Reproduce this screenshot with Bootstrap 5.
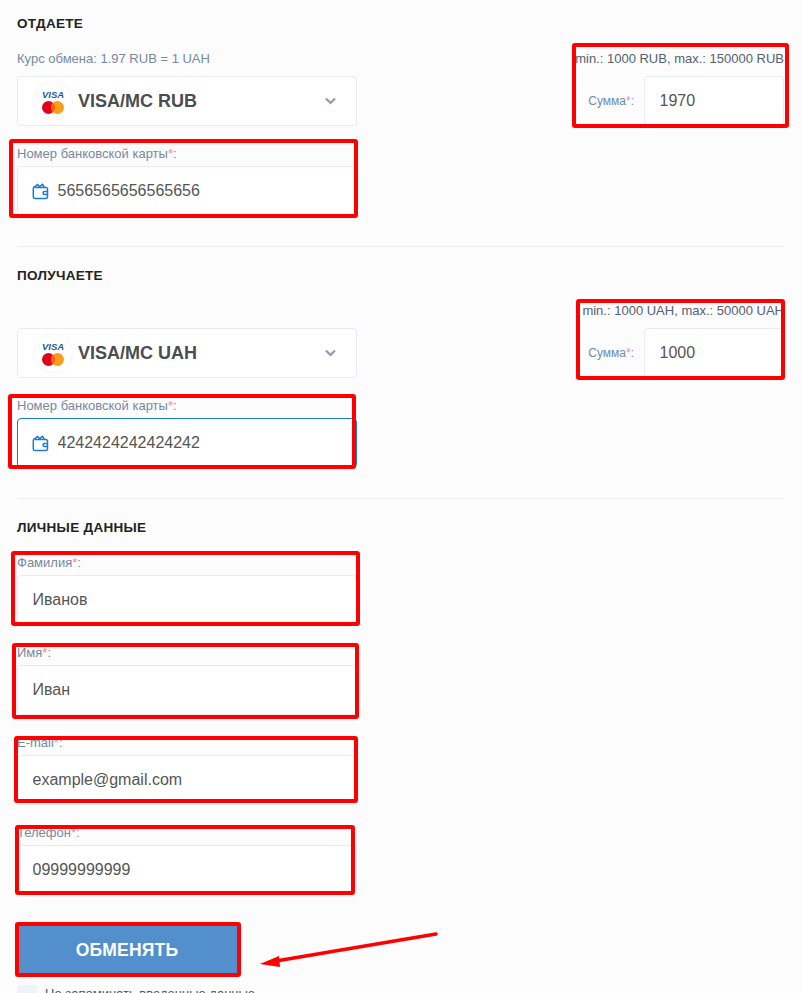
<!DOCTYPE html>
<html lang="ru">
<head>
<meta charset="utf-8">
<title>Обмен</title>
<link href="https://cdn.jsdelivr.net/npm/bootstrap@5.3.0/dist/css/bootstrap.min.css" rel="stylesheet">
<style>
html,body{margin:0;background:#fcfcfd}
body{font-family:"Liberation Sans",Arial,sans-serif;font-size:13px}
.sheet{position:relative;height:993px;overflow:hidden;padding:15px 19px 0 17px}
.sec-title{font-size:13.5px;font-weight:700;line-height:18px;height:16px;color:#222;letter-spacing:.3px;margin:0 0 19px}
.muted-line{font-size:13px;line-height:18px;height:16px;color:#78899f;margin-bottom:10px;white-space:nowrap}
.limit-line{font-size:13px;line-height:18px;height:16px;color:#556070;margin-bottom:10px;text-align:right;white-space:nowrap}
.left-col{width:340px}
.right-col{width:209px}
.pay-select{height:50px;background:#fff;border:1px solid #e8ebf3;border-radius:4px;padding:0 20px 0 15px;margin-bottom:19px}
.pay-logo{width:40px;height:40px;border:1px solid #f7f7f9;border-radius:50%;background:#fff;margin-right:5px}
.visa-word{font-size:9.5px;line-height:9px;font-weight:700;font-style:italic;color:#2a5a8f;margin:2px 0}
.pay-name{font-size:18px;font-weight:700;color:#4a4d51}
.field-label{display:block;font-size:13px;line-height:18px;height:16px;color:#78899f;margin:0 0 5px}
.req{color:#f28b9b}
.field-wrap{margin-bottom:19px}
.form-control.entry{height:50px;border:1px solid #e8ebf3;border-radius:4px;background:#fff;font-size:16px;color:#555;padding:0 14.5px;box-shadow:none}
.form-control.entry.icon-pad{padding-left:39.5px}
.form-control.entry.active-entry{border-color:#1b7ad1}
.icon-box{position:relative}
.wallet{position:absolute;left:15px;top:17px;width:17px;height:17px}
.sum-label{font-size:12px;color:#6f8cae;width:69px;text-align:right;padding-right:10px;white-space:nowrap}
.sum-entry{width:140px;flex:none}
.rule{border:0;border-top:1px solid #eceef5;opacity:1;margin:30px 0 20px}
.go-btn{width:220px;height:50px;background:#528fcc;border:0;border-radius:2px;color:#fff;font-size:17.5px;font-weight:700;letter-spacing:.2px;margin-top:11px}
.go-btn:hover{background:#528fcc;color:#fff}
.keep-row{margin-top:10px;font-size:13px;line-height:17px;color:#555}
.keep-box{width:20px;height:20px;background:#eef2fb;border-radius:3px;margin-right:8px}
.marks{position:absolute;left:0;top:0;width:803px;height:993px;pointer-events:none}
</style>
</head>
<body>
<div class="sheet">
  <h2 class="sec-title">ОТДАЕТЕ</h2>
  <div class="d-flex justify-content-between">
    <div class="left-col">
      <div class="muted-line">Курс обмена: 1.97 RUB = 1 UAH</div>
      <div class="pay-select d-flex align-items-center">
        <div class="pay-logo d-flex flex-column align-items-center justify-content-center">
          <span class="visa-word">VISA</span>
          <svg width="22" height="13" viewBox="0 0 22 13"><circle cx="6.5" cy="6.5" r="6.5" fill="#e3001b"/><circle cx="15.5" cy="6.5" r="6.5" fill="#f99e1c"/><path d="M11 1.7a6.5 6.5 0 0 1 0 9.6a6.5 6.5 0 0 1 0-9.6z" fill="#f4640f"/></svg>
        </div>
        <span class="pay-name flex-grow-1">VISA/MC RUB</span>
        <svg width="11" height="8" viewBox="0 0 11 8"><path d="M1 1.5l4.5 4.5l4.5-4.5" fill="none" stroke="#8f9dab" stroke-width="2.2"/></svg>
      </div>
      <label class="field-label">Номер банковской карты<span class="req">*</span>:</label>
      <div class="icon-box">
        <svg class="wallet" viewBox="0 0 17 17" fill="none" stroke="#1a7ad8" stroke-width="1.5"><path d="M3 4.5H14a1.5 1.5 0 0 1 1.5 1.5v8a1.5 1.5 0 0 1-1.5 1.5H3A1.7 1.7 0 0 1 1.3 14V5.5A2 2 0 0 1 3 3.5L5.5 1.5l2 2l3-2.2l2 3"/><path d="M15.5 8.5h-3a1.5 1.5 0 0 0 0 3h3"/></svg>
        <input class="form-control entry icon-pad" value="5656565656565656" aria-label="Номер карты">
      </div>
    </div>
    <div class="right-col">
      <div class="limit-line">min.: 1000 RUB, max.: 150000 RUB</div>
      <div class="d-flex align-items-center">
        <span class="sum-label"><span>Сумма</span><span class="req">*</span>:</span>
        <input class="form-control entry sum-entry" value="1970" aria-label="Сумма">
      </div>
    </div>
  </div>
  <hr class="rule">

  <h2 class="sec-title">ПОЛУЧАЕТЕ</h2>
  <div class="d-flex justify-content-between">
    <div class="left-col">
      <div class="muted-line"></div>
      <div class="pay-select d-flex align-items-center">
        <div class="pay-logo d-flex flex-column align-items-center justify-content-center">
          <span class="visa-word">VISA</span>
          <svg width="22" height="13" viewBox="0 0 22 13"><circle cx="6.5" cy="6.5" r="6.5" fill="#e3001b"/><circle cx="15.5" cy="6.5" r="6.5" fill="#f99e1c"/><path d="M11 1.7a6.5 6.5 0 0 1 0 9.6a6.5 6.5 0 0 1 0-9.6z" fill="#f4640f"/></svg>
        </div>
        <span class="pay-name flex-grow-1">VISA/MC UAH</span>
        <svg width="11" height="8" viewBox="0 0 11 8"><path d="M1 1.5l4.5 4.5l4.5-4.5" fill="none" stroke="#8f9dab" stroke-width="2.2"/></svg>
      </div>
      <label class="field-label">Номер банковской карты<span class="req">*</span>:</label>
      <div class="icon-box">
        <svg class="wallet" viewBox="0 0 17 17" fill="none" stroke="#1a7ad8" stroke-width="1.5"><path d="M3 4.5H14a1.5 1.5 0 0 1 1.5 1.5v8a1.5 1.5 0 0 1-1.5 1.5H3A1.7 1.7 0 0 1 1.3 14V5.5A2 2 0 0 1 3 3.5L5.5 1.5l2 2l3-2.2l2 3"/><path d="M15.5 8.5h-3a1.5 1.5 0 0 0 0 3h3"/></svg>
        <input class="form-control entry icon-pad active-entry" value="4242424242424242" aria-label="Номер карты">
      </div>
    </div>
    <div class="right-col">
      <div class="limit-line">min.: 1000 UAH, max.: 50000 UAH</div>
      <div class="d-flex align-items-center">
        <span class="sum-label"><span>Сумма</span><span class="req">*</span>:</span>
        <input class="form-control entry sum-entry" value="1000" aria-label="Сумма">
      </div>
    </div>
  </div>
  <hr class="rule">

  <h2 class="sec-title">ЛИЧНЫЕ ДАННЫЕ</h2>
  <div class="left-col">
    <div class="field-wrap"><label class="field-label">Фамилия<span class="req">*</span>:</label><input class="form-control entry" value="Иванов" aria-label="Фамилия"></div>
    <div class="field-wrap"><label class="field-label">Имя<span class="req">*</span>:</label><input class="form-control entry" value="Иван" aria-label="Имя"></div>
    <div class="field-wrap"><label class="field-label">E-mail<span class="req">*</span>:</label><input class="form-control entry" value="example@gmail.com" aria-label="E-mail"></div>
    <div class="field-wrap"><label class="field-label">Телефон<span class="req">*</span>:</label><input class="form-control entry" value="09999999999" aria-label="Телефон"></div>
  </div>
  <button type="button" class="btn go-btn">ОБМЕНЯТЬ</button>
  <div class="keep-row d-flex align-items-start"><span class="keep-box"></span><span>Не запоминать введенные данные</span></div>

  <svg class="marks" viewBox="0 0 803 993" fill="none" stroke="#f00" stroke-width="4">
    <rect x="574" y="45" width="213" height="81" rx="1"/>
    <rect x="11" y="141" width="345" height="75" rx="1"/>
    <rect x="578" y="301" width="205" height="77" rx="1"/>
    <rect x="10" y="396" width="344" height="71" rx="1"/>
    <rect x="13" y="553" width="345" height="71" rx="1"/>
    <rect x="14" y="645" width="343" height="72" rx="1"/>
    <rect x="16" y="738" width="340" height="63" rx="1"/>
    <rect x="17" y="827" width="336" height="66" rx="1"/>
    <rect x="17" y="924" width="222" height="51" rx="1"/>
    <path d="M436 934L276 961" stroke-linecap="round" stroke-width="3.5"/>
    <path d="M260 964L279 956L280 967Z" fill="#f00" stroke="none"/>
  </svg>
</div>
<script src="https://cdn.jsdelivr.net/npm/bootstrap@5.3.0/dist/js/bootstrap.bundle.min.js"></script>
</body>
</html>
